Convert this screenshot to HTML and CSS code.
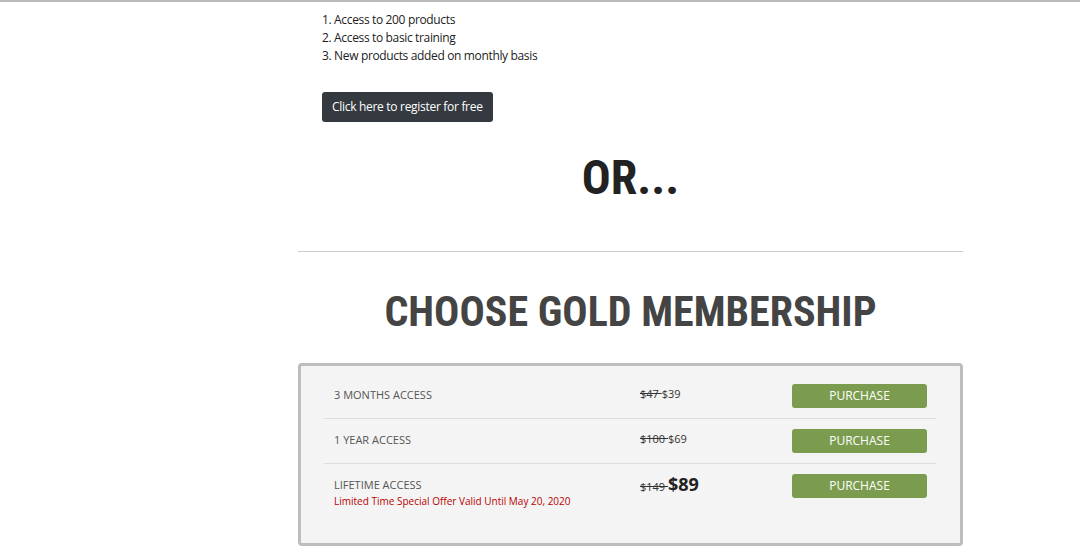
FILE: index.html
```html
<!DOCTYPE html>
<html>
<head>
<meta charset="utf-8">
<link rel="stylesheet" href="styles.css">
</head>
<body>
<div class="page">
  <div class="spacer"></div>
  <main class="content">
    <ol class="benefits">
      <li>Access to 200 products</li>
      <li>Access to basic training</li>
      <li>New products added on monthly basis</li>
    </ol>
    <div class="register"><a class="btn-dark" href="#">Click here to register for free</a></div>
    <h2 class="or">OR...</h2>
    <hr class="divider">
    <h2 class="choose">CHOOSE GOLD MEMBERSHIP</h2>
    <div class="plans">
      <div class="plan">
        <div class="plan-name">3 MONTHS ACCESS</div>
        <div class="plan-price"><s>$47 </s>$39</div>
        <div class="plan-action"><a class="btn-buy" href="#">PURCHASE</a></div>
      </div>
      <div class="plan">
        <div class="plan-name">1 YEAR ACCESS</div>
        <div class="plan-price"><s>$100 </s>$69</div>
        <div class="plan-action"><a class="btn-buy" href="#">PURCHASE</a></div>
      </div>
      <div class="plan last">
        <div class="plan-name">LIFETIME ACCESS<div class="offer">Limited Time Special Offer Valid Until May 20, 2020</div></div>
        <div class="plan-price"><s>$149 </s><strong class="big">$89</strong></div>
        <div class="plan-action"><a class="btn-buy" href="#">PURCHASE</a></div>
      </div>
    </div>
  </main>
</div>
</body>
</html>
```
FILE: styles.css
```css
html, body {
  margin: 0;
  padding: 0;
  background: #fff;
}
body {
  border-top: 2px solid #bbbbbb;
  font-family: "Open Sans", "Noto Sans", sans-serif;
  font-size: 12px;
  color: #333;
  height: 546px;
  overflow: hidden;
}
.page {
  display: grid;
  grid-template-columns: 298px 665px;
}
.benefits {
  margin: 9px 0 0;
  padding: 0 0 0 24px;
  list-style: decimal inside;
  line-height: 18px;
  color: #222;
  letter-spacing: -0.35px;
}
.register {
  margin-top: 27px;
  padding-left: 24px;
}
.btn-dark {
  display: inline-block;
  background: #343a40;
  color: #fff;
  text-decoration: none;
  height: 30px;
  line-height: 30px;
  padding: 0 10px 0 10px;
  border-radius: 3px;
  font-size: 12px;
  letter-spacing: -0.3px;
}
.or, .choose {
  font-family: "Liberation Sans Narrow", "Roboto Condensed", Roboto, sans-serif;
  font-weight: 700;
  text-align: center;
  margin: 0;
}
.or {
  font-size: 48px;
  line-height: 56px;
  color: #222;
  margin-top: 28px;
}
.divider {
  border: 0;
  border-top: 1px solid #cccccc;
  margin: 45px 0 0;
}
.choose {
  font-size: 42px;
  line-height: 52px;
  color: #444;
  margin-top: 34px;
}
.plans {
  margin-top: 25px;
  border: 3px solid #bdbdbd;
  border-radius: 4px;
  background: #f4f4f4;
  padding: 8px 24px 35px 23px;
}
.plan {
  display: grid;
  grid-template-columns: 306px 152px 1fr;
  height: 44px;
  border-bottom: 1px solid #dddddd;
  padding-left: 10px;
  color: #555;
  font-size: 11px;
}
.plan.last {
  border-bottom: 0;
}
.plan-name {
  padding-top: 13px;
  line-height: 16px;
}
.offer {
  color: #b00;
  font-size: 10px;
  line-height: 16px;
}
.plan-price {
  padding-top: 12px;
  line-height: 16px;
  color: #333;
}
.plan-price s {
  color: #333;
}
.big {
  font-size: 18px;
  color: #222;
}
.plan-action {
  padding-top: 10px;
}
.btn-buy {
  display: block;
  width: 135px;
  height: 24px;
  line-height: 24px;
  text-align: center;
  background: #7b9c4e;
  color: #fff;
  text-decoration: none;
  border-radius: 3px;
  font-size: 12px;
}
```
